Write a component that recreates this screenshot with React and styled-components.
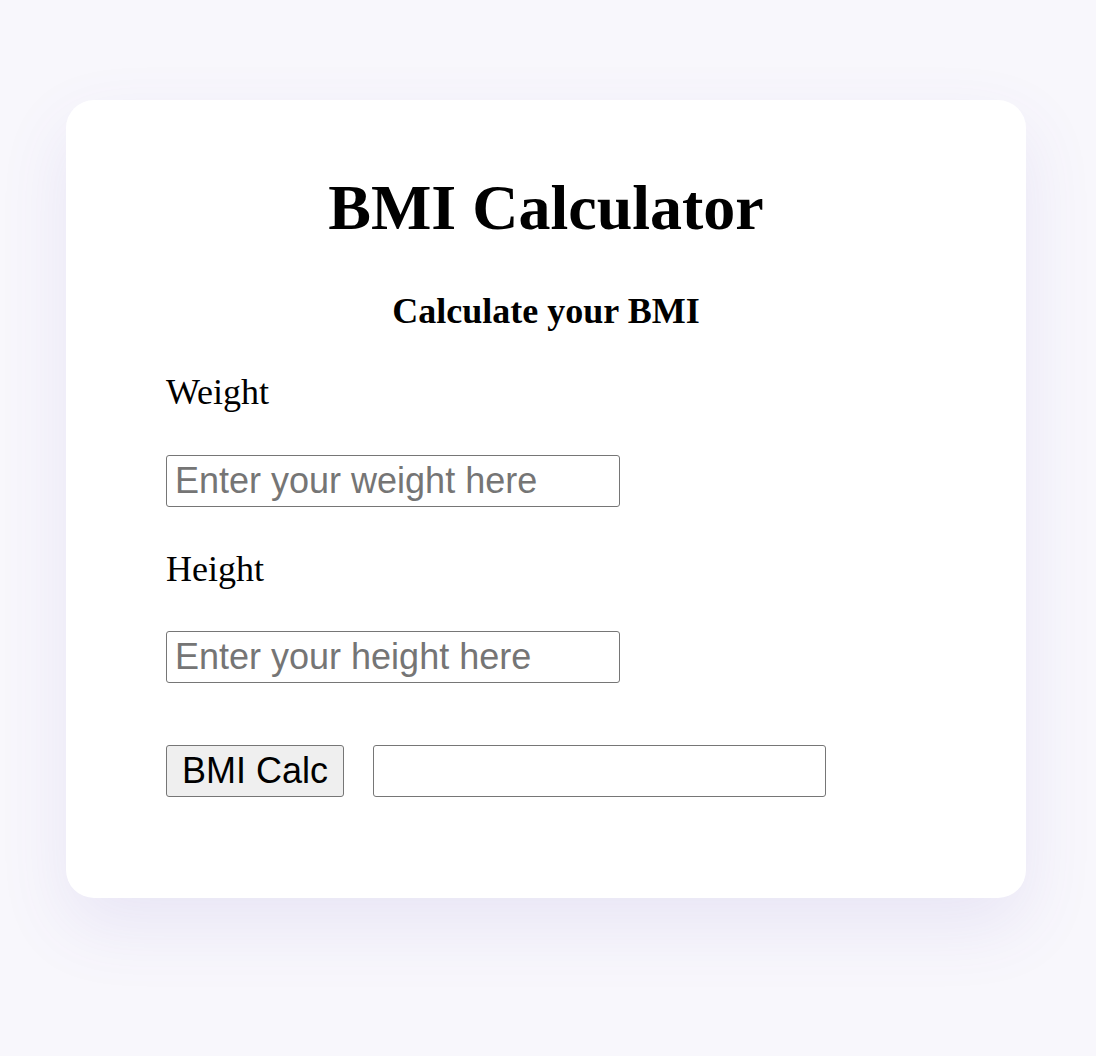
import React from "react";
import styled, { createGlobalStyle } from "styled-components";

const GlobalStyle = createGlobalStyle`
  html, body {
    margin: 0;
    padding: 0;
    background: #f8f7fc;
  }
  body {
    font-family: "Liberation Serif", "Times New Roman", serif;
    min-height: 1056px;
  }
`;

const Page = styled.div`
  display: flex;
  justify-content: flex-start;
  padding-top: 100px;
  padding-left: 66px;
`;

const Card = styled.div`
  box-sizing: border-box;
  width: 960px;
  height: 798px;
  background: #ffffff;
  border-radius: 28px;
  box-shadow: 0 28px 70px rgba(95, 75, 185, 0.1);
  padding: 71px 100px 101px;
  display: flex;
  flex-direction: column;
  align-items: flex-start;
`;

const Title = styled.h1`
  align-self: stretch;
  margin: 0;
  text-align: center;
  font-family: "Liberation Serif", "Times New Roman", serif;
  font-weight: 700;
  font-size: 64px;
  line-height: 74px;
  color: #000;
`;

const Subtitle = styled.h2`
  align-self: stretch;
  margin: 46px 0 0;
  text-align: center;
  font-family: "Liberation Serif", "Times New Roman", serif;
  font-weight: 700;
  font-size: 36px;
  line-height: 41px;
  color: #000;
`;

const Label = styled.label`
  display: block;
  margin-top: ${(p) => p.$top}px;
  font-family: "Liberation Serif", "Times New Roman", serif;
  font-size: 36px;
  line-height: 41px;
  color: #000;
`;

const Input = styled.input`
  box-sizing: border-box;
  width: ${(p) => p.$width || 454}px;
  height: 52px;
  margin-top: ${(p) => p.$top || 0}px;
  padding: 0 8px;
  border: 1px solid #767676;
  border-radius: 3px;
  background: #fff;
  font-family: "Liberation Sans", Arial, sans-serif;
  font-size: 36px;
  color: #000;
  outline: none;

  &::placeholder {
    color: #757575;
    opacity: 1;
  }
`;

const Row = styled.div`
  display: flex;
  align-items: center;
  gap: 29px;
  margin-top: 62px;
`;

const Button = styled.button`
  box-sizing: border-box;
  width: 178px;
  height: 52px;
  padding: 0;
  border: 1px solid #767676;
  border-radius: 3px;
  background: #efefef;
  font-family: "Liberation Sans", Arial, sans-serif;
  font-size: 36px;
  color: #000;
  cursor: pointer;
`;

export default function App() {
  return (
    <>
      <GlobalStyle />
      <Page>
        <Card>
          <Title>BMI Calculator</Title>
          <Subtitle>Calculate your BMI</Subtitle>
          <Label $top={40}>Weight</Label>
          <Input $top={42} placeholder="Enter your weight here" />
          <Label $top={42}>Height</Label>
          <Input $top={41} placeholder="Enter your height here" />
          <Row>
            <Button>BMI Calc</Button>
            <Input $width={453} readOnly />
          </Row>
        </Card>
      </Page>
    </>
  );
}
